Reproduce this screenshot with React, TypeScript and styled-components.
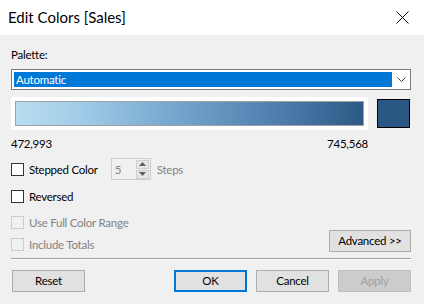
import styled, { createGlobalStyle } from "styled-components";

const GlobalStyle = createGlobalStyle`
  html, body {
    margin: 0;
    padding: 0;
    background: #f0f0f0;
  }
  * {
    box-sizing: border-box;
  }
`;

const FONT = `"Segoe UI", Lato, "Liberation Sans", sans-serif`;

const Dialog = styled.div`
  width: 424px;
  height: 304px;
  background: #f0f0f0;
  font-family: ${FONT};
  font-size: 11.5px;
  letter-spacing: -0.25px;
  color: #000;
  overflow: hidden;
`;

const TitleBar = styled.div`
  height: 35px;
  background: #fff;
  display: flex;
  align-items: center;
  justify-content: space-between;
  padding: 0 15px 0 8px;
`;

const Title = styled.div`
  font-size: 15px;
  letter-spacing: 0;
  line-height: 20px;
  margin-top: -1px;
`;

const Body = styled.div`
  padding: 12px 13px 0 11px;
  display: flex;
  flex-direction: column;
`;

const Label = styled.div`
  line-height: 16px;
  height: 16px;
`;

const Select = styled.div`
  margin-top: 6px;
  height: 21px;
  background: #fff;
  border: 1px solid #7a7a7a;
  padding: 2px 4px 2px 2px;
  display: flex;
  align-items: center;
  gap: 5px;
`;

const Selected = styled.div`
  flex: 1;
  height: 15px;
  background: #0078d7;
  color: #fff;
  line-height: 15px;
  padding-left: 2px;
`;

const GradientRow = styled.div`
  margin-top: 7px;
  display: flex;
  gap: 9px;
`;

const GradientFrame = styled.div`
  width: 357px;
  height: 33px;
  background: #fff;
  padding: 4px 4px 3px 4px;
`;

const GradientBar = styled.div`
  height: 25px;
  border: 1px solid #a0a0a0;
  background: linear-gradient(
    to right,
    #b9ddf1 0%,
    #9fcae6 20%,
    #7eaed3 40%,
    #6293bf 60%,
    #4a77a6 80%,
    #2c5985 100%
  );
`;

const Swatch = styled.div`
  margin-top: 2px;
  width: 33px;
  height: 29px;
  border: 1px solid #000;
  background: #2a5783;
`;

const RangeLabels = styled.div`
  width: 357px;
  margin-top: 6px;
  display: flex;
  justify-content: space-between;
  line-height: 16px;
`;

const OptionRow = styled.div<{ $top: number }>`
  margin-top: ${(p) => p.$top}px;
  height: 22px;
  display: flex;
  align-items: center;
`;

const Check = styled.span<{ $disabled?: boolean }>`
  width: 13px;
  height: 13px;
  border: 1px solid ${(p) => (p.$disabled ? "#cccccc" : "#333333")};
  background: ${(p) => (p.$disabled ? "#f0f0f0" : "#ffffff")};
  flex-shrink: 0;
`;

const OptionText = styled.span<{ $disabled?: boolean }>`
  margin-left: 5px;
  color: ${(p) => (p.$disabled ? "#838383" : "#000")};
`;

const Spinner = styled.div`
  margin-left: 13px;
  width: 40px;
  height: 22px;
  border: 1px solid #cccccc;
  display: flex;
  align-items: center;
  padding: 0 1px 0 3px;
  color: #838383;
`;

const SpinValue = styled.span`
  flex: 1;
`;

const SpinButtons = styled.div`
  display: flex;
  flex-direction: column;
  gap: 1px;
`;

const SpinButton = styled.div`
  width: 13px;
  height: 9px;
  background: #e5e5e5;
  border: 1px solid #cfcfcf;
  display: flex;
  align-items: center;
  justify-content: center;
`;

const StepsText = styled.span`
  margin-left: 6px;
  color: #838383;
`;

const Spacer = styled.div`
  flex: 1;
`;

const Button = styled.button<{ $variant?: "default" | "primary" | "disabled" }>`
  width: 73px;
  height: 22px;
  padding: 0;
  font-family: ${FONT};
  font-size: 11.5px;
  letter-spacing: -0.25px;
  line-height: 18px;
  color: ${(p) => (p.$variant === "disabled" ? "#a0a0a0" : "#000")};
  background: ${(p) => (p.$variant === "disabled" ? "#cccccc" : "#e1e1e1")};
  border: ${(p) =>
    p.$variant === "primary"
      ? "2px solid #0078d7"
      : p.$variant === "disabled"
      ? "1px solid #bfbfbf"
      : "1px solid #adadad"};
`;

const AdvancedButton = styled(Button)`
  width: 82px;
  margin-top: -6px;
`;

const Separator = styled.div`
  margin-top: 3px;
  height: 2px;
  border-top: 1px solid #a0a0a0;
  border-bottom: 1px solid #fff;
`;

const ButtonRow = styled.div`
  margin-top: 10px;
  display: flex;
  gap: 9px;
  padding-left: 1px;
`;

const CloseIcon = () => (
  <svg width="13" height="13" viewBox="0 0 13 13">
    <path d="M0.5 0.5 L12.5 12.5 M12.5 0.5 L0.5 12.5" stroke="#000" strokeWidth="1" fill="none" />
  </svg>
);

const Chevron = () => (
  <svg width="9" height="5" viewBox="0 0 9 5">
    <path d="M0.5 0.5 L4.5 4.5 L8.5 0.5" stroke="#444" strokeWidth="1" fill="none" />
  </svg>
);

const Arrow = ({ up }: { up?: boolean }) => (
  <svg width="7" height="4" viewBox="0 0 7 4">
    <path d={up ? "M0 4 L3.5 0 L7 4 Z" : "M0 0 L3.5 4 L7 0 Z"} fill="#606060" />
  </svg>
);

const App = () => {
  return (
    <>
      <GlobalStyle />
      <Dialog>
        <TitleBar>
          <Title>Edit Colors [Sales]</Title>
          <CloseIcon />
        </TitleBar>
        <Body>
          <Label>Palette:</Label>
          <Select>
            <Selected>Automatic</Selected>
            <Chevron />
          </Select>
          <GradientRow>
            <GradientFrame>
              <GradientBar />
            </GradientFrame>
            <Swatch />
          </GradientRow>
          <RangeLabels>
            <span>472,993</span>
            <span>745,568</span>
          </RangeLabels>
          <OptionRow $top={6}>
            <Check />
            <OptionText>Stepped Color</OptionText>
            <Spinner>
              <SpinValue>5</SpinValue>
              <SpinButtons>
                <SpinButton>
                  <Arrow up />
                </SpinButton>
                <SpinButton>
                  <Arrow />
                </SpinButton>
              </SpinButtons>
            </Spinner>
            <StepsText>Steps</StepsText>
          </OptionRow>
          <OptionRow $top={5}>
            <Check />
            <OptionText>Reversed</OptionText>
          </OptionRow>
          <OptionRow $top={4}>
            <Check $disabled />
            <OptionText $disabled>Use Full Color Range</OptionText>
          </OptionRow>
          <OptionRow $top={0}>
            <Check $disabled />
            <OptionText $disabled>Include Totals</OptionText>
            <Spacer />
            <AdvancedButton>Advanced &gt;&gt;</AdvancedButton>
          </OptionRow>
          <Separator />
          <ButtonRow>
            <Button>Reset</Button>
            <Spacer />
            <Button $variant="primary">OK</Button>
            <Button>Cancel</Button>
            <Button $variant="disabled">Apply</Button>
          </ButtonRow>
        </Body>
      </Dialog>
    </>
  );
};

export default App;
